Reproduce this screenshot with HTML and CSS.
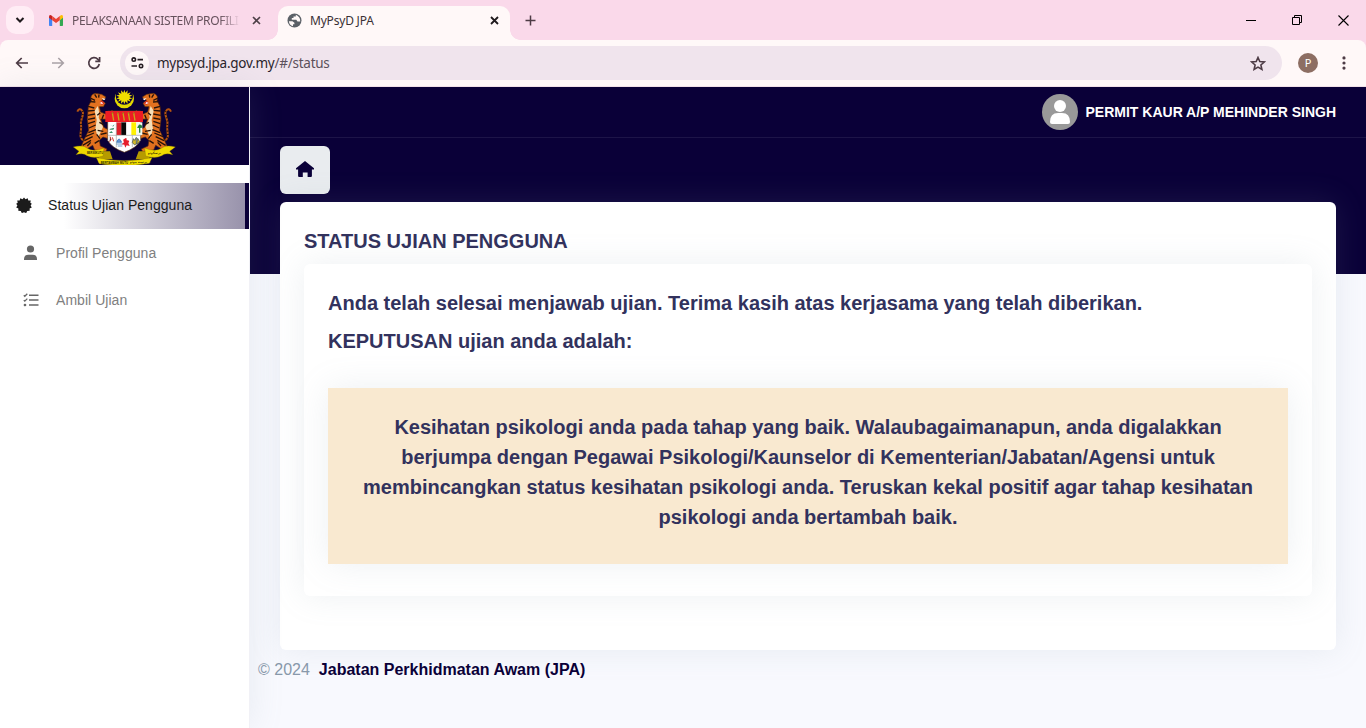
FILE: index.html
```html
<!DOCTYPE html>
<html lang="ms">
<head>
<meta charset="utf-8">
<title>MyPsyD JPA</title>
<link rel="stylesheet" href="styles.css">
</head>
<body>
<header class="browser">
  <div class="tabstrip">
    <div class="tab-search"><svg width="10" height="8" viewBox="0 0 10 8"><path d="M1.500 2 5 5.500 8.500 2" fill="none" stroke="#1f1a1d" stroke-width="2"/></svg></div>
    <div class="tab tab-inactive">
      <svg class="gmail" width="14" height="11" viewBox="0 0 14 11"><path d="M0 2v8.200q0 .8.800.8h2.400V4.500z" fill="#4285f4"/><path d="M14 2v8.200q0 .8-.8.800h-2.400V4.500z" fill="#34a853"/><path d="M10.800 1 12 .2q1.500-.7 2 1.300v1.300l-3.200 2.500z" fill="#fbbc04"/><path d="M3.200 1 2 .2Q.5-.5 0 1.500v1.300l3.200 2.500z" fill="#c5221f"/><path d="M3.200 1 7 3.900 10.800 1v4.200L7 8.100 3.200 5.200z" fill="#ea4335"/></svg>
      <span class="tab-title fade">PELAKSANAAN SISTEM PROFILI</span>
      <svg class="close" width="9" height="9" viewBox="0 0 9 9"><path d="m1 1 7 7M8 1 1 8" stroke="#4d4047" stroke-width="1.600"/></svg>
    </div>
    <div class="tab tab-active">
      <svg width="15" height="15" viewBox="0 0 15 15"><circle cx="7.500" cy="7.500" r="7" fill="#5b6067"/><path d="M1.900 8.200h3.500l2 1.500v1.500H6v2q-3.800-1-4.100-5zM8.800 1.800v1.700H6.500v1.600H4.800v1.700h4.500l1.200 1.800h2.700q.4-4.700-4.400-6.800z" fill="#fff8f8"/></svg>
      <span class="tab-title">MyPsyD JPA</span>
      <svg class="close" width="9" height="9" viewBox="0 0 9 9"><path d="m1 1 7 7M8 1 1 8" stroke="#1f1a1d" stroke-width="1.800"/></svg>
    </div>
    <svg class="plus" width="11" height="11" viewBox="0 0 11 11"><path d="M5.500.5v10M.5 5.500h10" stroke="#4d3b45" stroke-width="1.500"/></svg>
    <div class="window-controls">
      <svg width="11" height="11" viewBox="0 0 11 11"><path d="M0 5.500h10" stroke="#000"/></svg>
      <svg width="11" height="11" viewBox="0 0 11 11"><path d="M.5 2.500h7v7h-7zM2.500 2.500v-2h7v7h-2" fill="none" stroke="#000"/></svg>
      <svg width="11" height="11" viewBox="0 0 11 11"><path d="m.5.5 10 10m0-10-10 10" stroke="#000" stroke-width="1.100"/></svg>
    </div>
  </div>
  <div class="toolbar">
    <svg class="nav-icon" width="14" height="12" viewBox="0 0 14 12"><path d="M13 6H2M6.700 1 1.700 6l5 5" fill="none" stroke="#4d3b45" stroke-width="1.700"/></svg>
    <svg class="nav-icon" width="14" height="12" viewBox="0 0 14 12"><path d="M1 6h11M7.300 1l5 5-5 5" fill="none" stroke="#aaa2a6" stroke-width="1.600"/></svg>
    <svg class="nav-icon" width="14" height="14" viewBox="0 0 14 14"><path d="M12.300 8a5.300 5.300 0 1 1-1.400-4.700L12.500 5" fill="none" stroke="#4d3b45" stroke-width="1.700"/><path d="M12.600 1v4.300H8.300" fill="none" stroke="#4d3b45" stroke-width="1.700"/></svg>
    <div class="omnibox">
      <span class="site-info"><svg width="13" height="12" viewBox="0 0 13 12" fill="none" stroke="#251d21" stroke-width="1.600"><circle cx="2.800" cy="2.600" r="1.700"/><path d="M6.500 2.600H12M.5 9h5.500"/><circle cx="10" cy="9" r="1.700"/></svg></span>
      <span class="url">mypsyd.jpa.gov.my<span class="path">/#/status</span></span>
      <svg class="star" width="16" height="15" viewBox="0 0 16 15"><path d="m8 1.500 1.800 4.100 4.500.4-3.400 3 1 4.400L8 11.100l-3.900 2.300 1-4.400-3.400-3 4.500-.4z" fill="none" stroke="#4d3b45" stroke-width="1.600"/></svg>
    </div>
    <span class="profile">P</span>
    <svg class="menu" width="4" height="14" viewBox="0 0 4 14" fill="#4d3b45"><circle cx="2" cy="1.900" r="1.600"/><circle cx="2" cy="7" r="1.600"/><circle cx="2" cy="12.100" r="1.600"/></svg>
  </div>
</header>
<div class="app">
  <aside class="sidebar">
    <div class="brand">
      <svg width="130" height="78" viewBox="0 9 390 234">
        <defs>
          <g id="tiger">
            <path d="M66 170c-20-8-5-30-9-48-4-16 12-30 4-41-6-9-12-5-15 2" fill="none" stroke="#b55311" stroke-width="6"/>
            <path d="M66 168c-20-8-5-30-9-48-4-16 12-30 4-41" fill="none" stroke="#211006" stroke-width="6" stroke-dasharray="3 7"/>
            <path d="M88 50Q82 33 99 28L119 31 132 39 127 45 119 49 130 58 124 68 112 68 116 84 135 92 150 79 157 86 141 106 116 105 125 130 139 137 150 153 139 164 123 159 112 169 115 186 135 195 131 203 98 198 92 184 76 194 82 205 61 204 55 193 66 168 80 139 76 105 79 67Z" fill="#e2711f" stroke="#592a0c" stroke-width="2"/>
            <path d="M107 66q7 20 3 35l13 28-15 32-8-26 4-27-6-28z" fill="#f4dfb9"/>
            <path d="m119 49 9 8-7 7-9-7z" fill="#d93022"/><path d="m119 43 12 1-5 5zM112 57l8-3 3 7z" fill="#fff"/>
            <path d="m85 42 14 7M83 53l17 1M78 67l19 5M78 81l20-2M77 94l22-4M78 106l21-4M78 119l21-7M81 132l20-9M79 146l23-9M70 158l26-11M67 170l25-12M62 184l25-15M115 86l-9 8M125 92l-5 12M137 95l-2 12M112 115l13 7M107 139l17 3M116 151l18-4M104 151l10 13M98 178l13-8M76 186l10-11M98 31l6 10M111 32l-1 9" fill="none" stroke="#281309" stroke-width="4"/>
          </g>
        </defs>
        <circle cx="187" cy="44" r="29" fill="#e3d800"/><circle cx="187" cy="36" r="26" fill="#0a0038"/>
        <path d="m187 17 3 9 7-7-1 10 10-4-5 8 10 1-9 5 9 5-10 1 5 8-10-4 1 10-7-7-3 9-3-9-7 7 1-10-10 4 5-8-10-1 9-5-9-5 10-1-5-8 10 4-1-10 7 7z" fill="#f1df00"/>
        <use href="#tiger"/><use href="#tiger" transform="matrix(-1 0 0 1 373 0)"/>
        <path d="M137 81h99v88q-12 23-49 36-38-13-50-36z" fill="#fff" stroke="#5f391d" stroke-width="2"/>
        <path d="M130 81h113v33H130z" fill="#ed1c24"/>
        <path d="m151 86 4 24m12-24 4 24m12-24 4 24m12-24 4 24m12-24 4 24" stroke="#c6a618" stroke-width="4"/>
        <path d="m148 89 8-4m8 4 8-4m8 4 8-4m8 4 8-4m8 4 8-4" stroke="#8a6d14" stroke-width="2"/>
        <path d="M163 115h16v38h-16z" fill="#df202a"/><path d="M178 115h15v38h-15z" fill="#090909"/><path d="M193 115h15v38h-15z" fill="#fff"/><path d="M208 115h15v38h-15z" fill="#fff200"/><path d="M223 115h18v38h-18z" fill="#f4f8ef"/>
        <path d="m229 125-4 6 6 1v14h4v-14l6-1q1-7-5-9-5-2-7 3z" fill="#23823a"/>
        <path d="M145 122q6 8 12-1-1 12-12 1m-3 13 15-4-3 6h-10m-3 10 7-6 5 6" fill="#38916b"/>
        <path d="M137 154h101M163 116v74m48-36v36" stroke="#a0a5a0" stroke-width="2"/>
        <path d="m144 158 3 8-4 7M151 160l4 12" stroke="#cf3630" stroke-width="3"/><path d="M164 175q7-20 15 0zm-1 5h19m-15 6h14" fill="#6994d1" stroke="#2269b6" stroke-width="2"/>
        <path d="M187 165q8-8 7 4 12-1 5 8l4 9-9-2-4 7-3-9-8-1 7-6q-5-9 1-10z" fill="#e61e2c"/><path d="m214 164 4 5 5-9v19l-5 4-7-7zm13-1-3 18 9-8z" fill="#d2b92a" stroke="#2c4350" stroke-width="2"/>
        <path d="M97 202h47l8 24h-28l-16 10 3-15-14-3zM277 202h-47l-9 24h28l16 10-4-15 16-3z" fill="#b69b00"/>
        <path d="M34 189q28-8 42 4 18 12 50-1l-3 24q-29 9-48-1-11-9-33-3l9-10zM340 189q-28-8-42 4-18 12-50-1l3 24q29 9 48-1 11-9 33-3l-9-10z" fill="#efd900" stroke="#8a7500"/>
        <path d="M103 221q84 18 167 0l-8 17q-70 12-150 1z" fill="#f1de00" stroke="#9b8300"/>
        <g class="motto"><text x="75" y="209" textLength="48" lengthAdjust="spacingAndGlyphs">BERSEKUTU</text><text x="116" y="239" textLength="82" lengthAdjust="spacingAndGlyphs">BERTAMBAH MUTU</text><text x="258" y="209">برسكوتو</text><text x="204" y="238">برتمبه موتو</text></g>
      </svg>
    </div>
    <nav class="side-nav">
      <a class="nav-link active"><svg width="16" height="16" viewBox="-8 -8 16 16"><path d="m0-7.500 1.500 1.800 2.200-1.100.6 2.400 2.500-.1-.5 2.300 1.500 1-1.200 1.700 1.200 1.900-2.200 1 .1 2.300-2.500.2-1 2.200L0 7.200l-2.200.9-1-2.200-2.500-.2.1-2.300-2.200-1L-6.600.500l-1.200-1.700 1.500-1-.5-2.300 2.500.1.600-2.400 2.200 1.100z" fill="#1b1b1b"/></svg><span>Status Ujian Pengguna</span></a>
      <a class="nav-link"><svg width="15" height="16" viewBox="0 0 15 16" fill="#666"><circle cx="7.500" cy="4" r="3.600"/><path d="M1 15v-1q0-4.300 4.500-4.300h4q4.500 0 4.500 4.300v1z"/></svg><span>Profil Pengguna</span></a>
      <a class="nav-link"><svg width="16" height="14" viewBox="0 0 16 14" fill="none" stroke="#666"><path d="m.8 2.300 1 1L4.300.800M.8 7.100l1 1L4.300 5.600" stroke-width="1.300"/><path d="M6 2.200h9.500M6 7.100h9.500M6 12h9.500" stroke-width="1.500"/><circle cx="2" cy="12" r=".7" stroke-width="1.300"/></svg><span>Ambil Ujian</span></a>
    </nav>
  </aside>
  <main class="main">
    <div class="topbar">
      <svg width="36" height="36" viewBox="0 0 36 36"><circle cx="18" cy="18" r="18" fill="#999"/><circle cx="18" cy="12" r="6" fill="#fff"/><path d="M8 28q0-9 8-9h4q8 0 8 9 0 2-2 2H10q-2 0-2-2z" fill="#fff"/></svg>
      <span>PERMIT KAUR A/P MEHINDER SINGH</span>
    </div>
    <div class="content">
      <a class="home"><svg width="18" height="16" viewBox="0 0 18 16"><path d="M9 0 18 7.200v1.300H15.900V15q0 1-1 1h-3.300v-4.600H6.800V16H3.100q-1 0-1-1V8.500H0V7.200z" fill="#0a0038"/></svg></a>
      <section class="card">
        <h1>STATUS UJIAN PENGGUNA</h1>
        <div class="card inner">
          <h2>Anda telah selesai menjawab ujian. Terima kasih atas kerjasama yang telah diberikan.</h2>
          <h2>KEPUTUSAN ujian anda adalah:</h2>
          <div class="result">Kesihatan psikologi anda pada tahap yang baik. Walaubagaimanapun, anda digalakkan<br>berjumpa dengan Pegawai Psikologi/Kaunselor di Kementerian/Jabatan/Agensi untuk<br>membincangkan status kesihatan psikologi anda. Teruskan kekal positif agar tahap kesihatan<br>psikologi anda bertambah baik.</div>
        </div>
      </section>
    </div>
    <footer class="footer"><span>© 2024</span><b>Jabatan Perkhidmatan Awam (JPA)</b></footer>
  </main>
</div>
</body>
</html>
```

FILE: styles.css
```css
* { box-sizing: border-box; }
body { margin: 0; width: 1366px; height: 728px; overflow: hidden; font-family: "Liberation Sans", Arial, sans-serif; background: #f8f9fe; display: flex; flex-direction: column; }
svg { display: block; flex: none; }
.browser { height: 87px; flex: none; background: #fad9ea; font-family: "Noto Sans", sans-serif; border-bottom: 1px solid #f1e1e8; }
.tabstrip { height: 40px; display: flex; align-items: flex-start; padding-left: 6px; }
.tab-search { width: 28px; height: 28px; margin-top: 6px; border-radius: 10px; background: #ffedf5; display: flex; align-items: center; justify-content: center; }
.tab { height: 34px; margin-top: 6px; display: flex; align-items: center; font-size: 12px; padding-bottom: 6px; }
.tab-inactive { width: 244px; padding-left: 15px; color: #66515c; }
.tab-active { width: 232px; padding-left: 9px; background: #fff8f8; border-radius: 10px 10px 0 0; color: #3a3035; position: relative; }
.tab-active::before, .tab-active::after { content: ""; position: absolute; bottom: 0; width: 10px; height: 10px; }
.tab-active::before { left: -10px; background: radial-gradient(circle at 0 0, transparent 9.5px, #fff8f8 10px); }
.tab-active::after { right: -10px; background: radial-gradient(circle at 100% 0, transparent 9.5px, #fff8f8 10px); }
.tab-title { margin-left: 8px; padding-top: 1px; white-space: nowrap; letter-spacing: -.35px; line-height: 18px; }
.tab-active .tab-title { letter-spacing: -.2px; }
.fade { width: 172px; margin-left: 9px; -webkit-mask-image: linear-gradient(90deg, #000 148px, transparent 168px); }
.close { margin-left: auto; margin-right: 11px; }
.tab-inactive .close { margin-right: 17px; }
.plus { margin: 15px 0 0 15px; }
.window-controls { display: flex; gap: 35px; margin: 15px 17px 0 auto; }
.toolbar { height: 46px; display: flex; align-items: center; background: #fff8f8; border-radius: 8px 8px 0 0; padding: 0 20px 0 15px; }
.nav-icon { margin-right: 22px; }
.nav-icon:nth-child(3) { margin-right: 19px; }
.omnibox { width: 1162px; height: 34px; border-radius: 17px; background: #f0e4ed; display: flex; align-items: center; padding: 0 16px 0 5px; }
.site-info { width: 24px; height: 24px; border-radius: 50%; background: #fff8f8; display: flex; align-items: center; justify-content: center; }
.url { margin-left: 8px; padding-bottom: 1px; font-size: 13.5px; letter-spacing: -.25px; color: #29232a; }
.path { color: #5c505b; }
.star { margin-left: auto; }
.profile { width: 20px; height: 20px; margin-left: 16px; border-radius: 50%; background: #8d6e63; color: #fff; font-size: 11px; line-height: 20px; text-align: center; }
.menu { margin-left: auto; }
.app { flex: 1; display: flex; min-height: 0; }
.sidebar { width: 250px; background: #fff; border-right: 1px solid #f1f1f6; box-shadow: 0 0 2rem 0 rgba(136,152,170,.15); position: relative; }
.brand { height: 78px; background: #0a0038; padding-left: 62px; overflow: hidden; }
.motto { font: bold 10px "Liberation Sans", sans-serif; fill: #302900; }
.side-nav { padding-top: 18px; display: flex; flex-direction: column; }
.nav-link { height: 46px; margin-bottom: 1px; display: flex; align-items: center; padding-left: 23px; color: #808080; font-size: 14px; }
.nav-link span { margin-left: 18px; letter-spacing: .04px; }
.nav-link:nth-child(3) span { margin-left: 17px; }
.nav-link.active { padding-left: 16px; padding-bottom: 2px; color: #1b1b1b; background: linear-gradient(90deg, #fff 26%, #9892ab 100%); border-right: 4px solid #0a0038; }
.nav-link.active span { margin-left: 16px; }
.main { flex: 1; background: linear-gradient(#0a0038 187px, #f8f9fe 187px); }
.topbar { height: 51px; border-bottom: 1px solid #1d1448; display: flex; align-items: center; justify-content: flex-end; padding-right: 30px; gap: 8px; color: #fff; font-size: 14px; font-weight: bold; }
.content { padding: 8px 30px 0; }
.home { width: 50px; height: 48px; padding-bottom: 2px; border-radius: 6px; background: #e9ecef; display: flex; align-items: center; justify-content: center; }
.card { margin-top: 8px; height: 448px; padding: 24px; border-radius: 6px; background: #fff; box-shadow: 0 0 2rem 0 rgba(136,152,170,.15); color: #32325d; }
h1, h2 { margin: 0; font-size: 20px; line-height: 30px; white-space: nowrap; }
h2 { margin-bottom: 8px; }
.inner { height: 332px; }
.result { height: 176px; margin-top: 32px; padding-top: 24px; background: #f9e9d0; text-align: center; font-size: 20px; font-weight: bold; line-height: 30px; white-space: nowrap; box-shadow: 0 0 2rem 0 rgba(136,152,170,.15); }
.footer { display: flex; gap: 9px; padding: 8px 0 0 8px; font-size: 16px; line-height: 24px; color: #8898aa; }
.footer b { color: #0a0038; }
```
